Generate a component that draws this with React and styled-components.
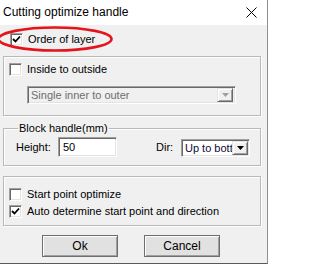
import React from 'react';
import styled, { createGlobalStyle } from 'styled-components';

const GlobalStyle = createGlobalStyle`
	html, body {
		margin: 0;
		padding: 0;
		background: #ffffff;
	}
	body {
		font-family: 'Liberation Sans', Arial, sans-serif;
		font-size: 11px;
		color: #000;
	}
`;

const CheckMark = () => (
	<svg width="9" height="9" viewBox="0 0 9 9">
		<path d="M1 4 L3.5 6.5 L8 1.5" fill="none" stroke="#000" strokeWidth="1.8" />
	</svg>
);

const Check = ({ checked, label }) => (
	<CheckRow>
		<Box>{checked && <CheckMark />}</Box>
		<span>{label}</span>
	</CheckRow>
);

const Arrow = ({ disabled }) => (
	<ArrowBtn disabled={disabled}>
		<svg width="7" height="4" viewBox="0 0 7 4">
			<path d="M0 0 H7 L3.5 4 Z" fill={disabled ? '#a0a0a0' : '#000'} />
		</svg>
	</ArrowBtn>
);

const App = () => {
	return (
		<>
			<GlobalStyle />
			<Window>
				<TitleBar>
					<span>Cutting optimize handle</span>
					<svg width="11" height="11" viewBox="0 0 11 11">
						<path d="M0.5 0.5 L10.5 10.5 M10.5 0.5 L0.5 10.5" stroke="#000" strokeWidth="1" />
					</svg>
				</TitleBar>
				<Body>
					<TopRow>
						<Check checked label="Order of layer" />
						<Marker width="118" height="28" viewBox="0 0 118 28">
							<ellipse cx="58" cy="13" rx="56.5" ry="11.5" fill="none" stroke="#e3141b" strokeWidth="2.6" />
						</Marker>
					</TopRow>

					<Group height={60} pad="6px 0 0 5px">
						<Check label="Inside to outside" />
						<Combo disabled>
							<span>Single inner to outer</span>
							<Arrow disabled />
						</Combo>
					</Group>

					<Fieldset>
						<legend>Block handle(mm)</legend>
						<FieldRow>
							<Label width={42}>Height:</Label>
							<TextInput>50</TextInput>
							<Label width={25} gap={39}>Dir:</Label>
							<Select>
								<span>Up to bott</span>
								<Arrow />
							</Select>
						</FieldRow>
					</Fieldset>

					<Group height={50} pad="11px 0 0 5px" gap={4}>
						<Check label="Start point optimize" />
						<Check checked label="Auto determine start point and direction" />
					</Group>

					<Buttons>
						<Button>Ok</Button>
						<Button>Cancel</Button>
					</Buttons>
				</Body>
			</Window>
		</>
	);
};

const Window = styled.div`
	width: 267px;
	height: 263px;
	border-right: 1px solid #8f8f8f;
	border-bottom: 1px solid #5a5a5a;
	display: flex;
	flex-direction: column;
	background: #f0f0f0;
`;

const TitleBar = styled.div`
	height: 25px;
	flex: none;
	background: #ffffff;
	display: flex;
	align-items: center;
	justify-content: space-between;
	padding: 0 10px 0 3px;
	font-size: 12px;
	color: #000;
	span {
		margin-top: -1px;
	}
	svg {
		margin-top: -1px;
	}
`;

const Body = styled.div`
	flex: 1;
	display: flex;
	flex-direction: column;
	padding: 8px 6px 8px 3px;
`;

const TopRow = styled.div`
	position: relative;
	height: 13px;
	padding-left: 7px;
`;

const Marker = styled.svg`
	position: absolute;
	left: -6px;
	top: -7px;
	pointer-events: none;
`;

const CheckRow = styled.div`
	display: flex;
	align-items: center;
	gap: 5px;
	height: 13px;
	white-space: nowrap;
	span {
		line-height: 13px;
	}
`;

const Box = styled.div`
	width: 13px;
	height: 13px;
	box-sizing: border-box;
	background: #fff;
	border: 1px solid;
	border-color: #a0a0a0 #ffffff #ffffff #a0a0a0;
	box-shadow: inset 1px 1px 0 #696969, inset -1px -1px 0 #e3e3e3;
	display: flex;
	align-items: center;
	justify-content: center;
	flex: none;
`;

const Group = styled.div`
	margin-top: 10px;
	height: ${({ height }) => height}px;
	box-sizing: border-box;
	border: 1px solid #b9b9b9;
	box-shadow: inset 1px 1px 0 #fff, 1px 1px 0 #fff;
	padding: ${({ pad }) => pad};
	display: flex;
	flex-direction: column;
	gap: ${({ gap }) => gap || 0}px;
	& + & {
		margin-top: 7px;
	}
`;

const Sunken = styled.div`
	box-sizing: border-box;
	border: 1px solid;
	border-color: #a0a0a0 #ffffff #ffffff #a0a0a0;
	box-shadow: inset 1px 1px 0 #696969, inset -1px -1px 0 #e3e3e3;
	display: flex;
	align-items: center;
	white-space: nowrap;
	overflow: hidden;
`;

const Combo = styled(Sunken)`
	margin: 10px 0 0 18px;
	width: 209px;
	height: 18px;
	background: #f0f0f0;
	color: #6d6d6d;
	padding: 2px 2px 2px 3px;
	justify-content: space-between;
`;

const ArrowBtn = styled.div`
	width: 16px;
	height: 14px;
	box-sizing: border-box;
	background: #f0f0f0;
	border: 1px solid;
	border-color: #e3e3e3 #696969 #696969 #e3e3e3;
	box-shadow: inset 1px 1px 0 #fff, inset -1px -1px 0 #a0a0a0;
	display: flex;
	align-items: center;
	justify-content: center;
	flex: none;
`;

const Fieldset = styled.fieldset`
	margin: 5px 0 0;
	padding: 2px 0 8px 12px;
	min-width: 0;
	border: 1px solid #b9b9b9;
	box-shadow: inset 1px 1px 0 #fff, 1px 1px 0 #fff;
	legend {
		padding: 0 1px;
		margin-left: 2px;
		line-height: 14px;
		height: 14px;
	}
`;

const FieldRow = styled.div`
	display: flex;
	align-items: center;
	height: 20px;
`;

const Label = styled.span`
	width: ${({ width }) => width}px;
	margin-left: ${({ gap }) => gap || 0}px;
	flex: none;
`;

const TextInput = styled(Sunken)`
	width: 59px;
	height: 20px;
	background: #fff;
	align-items: flex-start;
	padding: 3px 4px;
	line-height: 12px;
`;

const Select = styled(Sunken)`
	margin-top: 2px;
	width: 69px;
	height: 18px;
	background: #fff;
	padding: 2px 1px 2px 3px;
	justify-content: space-between;
	color: #0a0a3a;
	span {
		overflow: hidden;
	}
`;

const Buttons = styled.div`
	margin-top: 9px;
	display: flex;
	padding-left: 39px;
	gap: 26px;
`;

const Button = styled.div`
	width: 76px;
	height: 22px;
	box-sizing: border-box;
	border: 1px solid #6e6e6e;
	background: #e1e1e1;
	box-shadow: inset 1px 1px 0 #fdfdfd, inset -1px -1px 0 #a0a0a0;
	display: flex;
	align-items: center;
	justify-content: center;
	font-size: 12px;
`;

export default App;
